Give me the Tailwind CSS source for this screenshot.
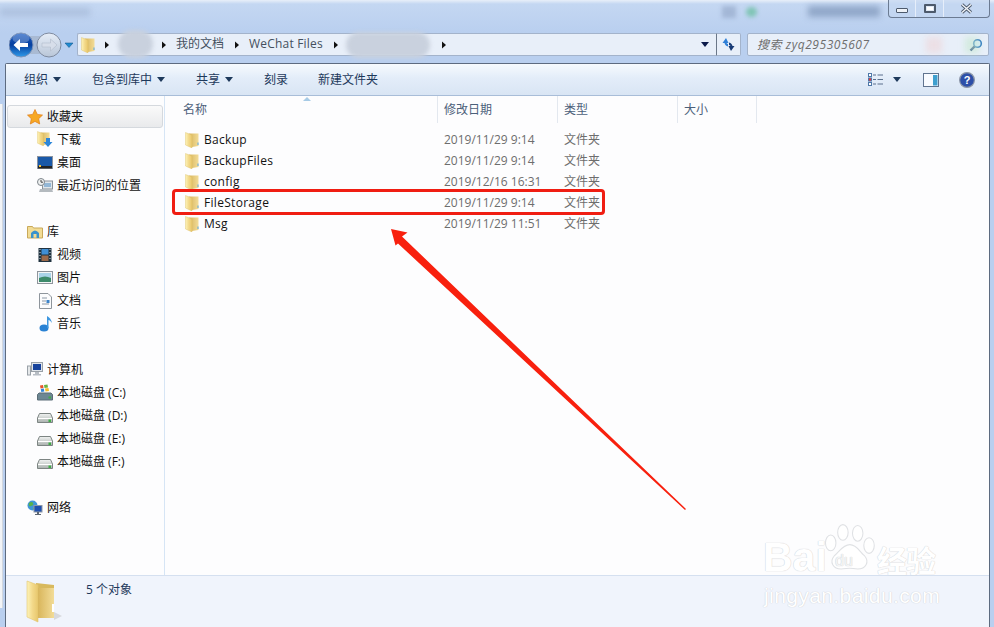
<!DOCTYPE html>
<html lang="zh-CN">
<head>
<meta charset="UTF-8">
<title>WeChat Files</title>
<script src="https://cdn.jsdelivr.net/npm/@tailwindcss/browser@4"></script>
</head>
<body class="relative w-[994px] h-[627px] overflow-hidden bg-[#b9cfef] text-[12px] leading-none text-[#111] font-['Open_Sans','Noto_Sans_CJK_SC',sans-serif]">

<svg class="absolute w-0 h-0">
  <defs>
    <linearGradient id="fold" x1="0" y1="0" x2="1" y2="0"><stop offset="0" stop-color="#fdf3b8"/><stop offset=".5" stop-color="#f3d98a"/><stop offset="1" stop-color="#e8c76c"/></linearGradient>
    <linearGradient id="inner" x1="0" y1="0" x2="1" y2="0"><stop offset="0" stop-color="#d9b65c"/><stop offset="1" stop-color="#f2dc98"/></linearGradient>
    <linearGradient id="back" x1="0" y1="0" x2="0" y2="1"><stop offset="0" stop-color="#1f5fc4"/><stop offset=".5" stop-color="#063f9f"/><stop offset="1" stop-color="#2f9bea"/></linearGradient>
    <linearGradient id="fwd" x1="0" y1="0" x2="0" y2="1"><stop offset="0" stop-color="#e6edf7"/><stop offset="1" stop-color="#b9c6d8"/></linearGradient>
    <linearGradient id="drive" x1="0" y1="0" x2="0" y2="1"><stop offset="0" stop-color="#f2f4f3"/><stop offset="1" stop-color="#a9b0ad"/></linearGradient>
    <symbol id="folder" viewBox="0 0 14 16">
      <path d="M4 1.500h9.500V14L7 15z" fill="url(#inner)"/>
      <path d="M.5.500 7 3V16L.5 13z" fill="url(#fold)" stroke="#dcbd62" stroke-width=".4"/>
      <rect x="12.500" y="10.500" width="1" height="2.500" fill="#5aa6e0"/>
    </symbol>
    <symbol id="tri" viewBox="0 0 8 8"><path d="M2 .5l4 3.500-4 3.500z" fill="#111"/></symbol>
    <symbol id="drv" viewBox="0 0 16 12">
      <path d="M2.500 1.500h11L15.500 6v4.500H.5V6z" fill="url(#drive)" stroke="#7d8583"/>
      <path d="M1 6.500h14" stroke="#fff"/>
      <rect x="11.500" y="7.500" width="2.500" height="2.500" fill="#3fae45"/>
    </symbol>
  </defs>
</svg>

<!-- title bar -->
<div class="relative h-[33px] bg-[linear-gradient(#e8eff9_0,#c4d7f2_4px,#b9cfef_100%)]">
  <div class="absolute left-0 top-[8px] w-[90px] h-[8px] bg-[#8fa3c4]/40 blur-[3px]"></div>
  <div class="absolute left-[722px] top-[6px] w-[14px] h-[12px] bg-[#8fa3c4]/60 blur-[2px]"></div>
  <div class="absolute left-[746px] top-[7px] w-[11px] h-[10px] rounded-full bg-[#6fc1a6]/80 blur-[2px]"></div>
  <div class="absolute left-[808px] top-[6px] w-[72px] h-[11px] bg-[#7088ad]/60 blur-[3px]"></div>
  <div class="absolute left-[888px] top-0 w-[102px] h-[18px] flex border border-t-0 border-[#6b7b92] rounded-b-[4px] bg-[#c5d7f1]/70">
    <div class="w-[27px] flex items-end justify-center pb-[4px] border-r border-[#e6eefa]"><div class="w-[12px] h-[5px] bg-[#eef2f7] border border-[#4d5a6c] rounded-[1px]"></div></div>
    <div class="w-[28px] flex items-center justify-center border-r border-[#e6eefa]"><div class="w-[12px] h-[9px] border-[2px] border-[#4d5a6c] bg-[#dfe8f4] rounded-[1px] flex items-center justify-center"><div class="w-[6px] h-[3px] bg-white"></div></div></div>
    <div class="flex-1 flex items-center justify-center">
      <svg width="13" height="11" viewBox="0 0 13 11"><path d="M2 1.500 11 9.500M11 1.500 2 9.500" stroke="#4d5a6c" stroke-width="3.200"/><path d="M2 1.500 11 9.500M11 1.500 2 9.500" stroke="#f2f5f9" stroke-width="1.400"/></svg>
    </div>
  </div>
</div>

<!-- nav row -->
<div class="flex h-[23px] pl-[9px] pr-[5px]">
  <div class="relative w-[68px] h-[23px] flex items-center">
    <svg width="68" height="28" viewBox="0 0 68 28" class="absolute left-0 top-[-2px]">
      <rect x="14" y="5" width="28" height="18" fill="#a9bad3"/>
      <circle cx="12" cy="14" r="12" fill="url(#back)" stroke="#7d93b8"/>
      <ellipse cx="12" cy="7.500" rx="8.500" ry="5" fill="#fff" opacity=".25"/>
      <path d="M4.500 14l6.500-6V12h8v4H11v4z" fill="#fff"/>
      <circle cx="40" cy="14" r="12" fill="url(#fwd)" stroke="#7f8ba0"/>
      <path d="M48 14l-6.500-6V12H33v4h8.500v4z" fill="#d7deea" stroke="#aab4c4" stroke-width=".5"/>
      <path d="M56 12h8l-4 4.500z" fill="#1f8ad0" stroke="#0f4f80" stroke-width=".5"/>
    </svg>
  </div>
  <div class="flex items-center w-[639px] h-[23px] bg-[#e8eff9] border border-r-0 border-[#a3b3cb] rounded-l-[2px] relative">
    <svg class="ml-[3px] w-[14px] h-[16px]"><use href="#folder"/></svg>
    <svg class="absolute left-[25px] top-[7px] w-[8px] h-[8px]"><use href="#tri"/></svg>
    <div class="absolute left-[40px] top-[-4px] w-[35px] h-[28px] rounded-full bg-[#c9d1de] blur-[2px]"></div>
    <svg class="absolute left-[82px] top-[7px] w-[8px] h-[8px]"><use href="#tri"/></svg>
    <span class="absolute left-[98px] top-[4px] text-[#444f5e]">我的文档</span>
    <svg class="absolute left-[155px] top-[7px] w-[8px] h-[8px]"><use href="#tri"/></svg>
    <span class="absolute left-[171px] top-[4px] text-[#444f5e] tracking-[.2px]">WeChat Files</span>
    <svg class="absolute left-[254px] top-[7px] w-[8px] h-[8px]"><use href="#tri"/></svg>
    <div class="absolute left-[268px] top-[-2px] w-[84px] h-[26px] rounded-full bg-[#c9d1de] blur-[2px]"></div>
    <svg class="absolute left-[362px] top-[7px] w-[8px] h-[8px]"><use href="#tri"/></svg>
    <svg class="absolute right-[7px] top-[8px]" width="8" height="5" viewBox="0 0 8 5"><path d="M0 0h8L4 5z" fill="#0b1a4a"/></svg>
  </div>
  <div class="w-[25px] h-[23px] bg-[#e8eff9] border border-l-[#6b7788] border-y-[#a3b3cb] border-r-[#a3b3cb] rounded-r-[2px] flex items-center justify-center">
    <svg width="15" height="15" viewBox="0 0 15 15"><path d="M5 1 1.500 6H3.500C4 8 5 9 7 9.500V7C6 6.800 5.700 6.300 5.500 6H7.500z" fill="#2f7fd6"/><path d="M10 14l3.500-5H11.500C11 7 10 6 8 5.500V8C9 8.200 9.300 8.700 9.500 9H7.500z" fill="#173a75"/></svg>
  </div>
  <div class="ml-[6px] w-[242px] h-[23px] bg-[#e8eff9] border border-[#a3b3cb] rounded-[2px] flex items-center pl-[9px] pr-[5px] relative">
    <span class="italic text-[#6d6d6d] whitespace-nowrap tracking-[.55px]">搜索 zyq295305607</span>
    <div class="absolute left-[178px] top-[3px] w-[16px] h-[16px] bg-[#f3c9c9]/40 blur-[3px]"></div>
    <div class="absolute left-[217px] top-[3px] w-[14px] h-[16px] bg-[#c5e8cf]/60 blur-[3px]"></div>
    <svg class="ml-auto" width="14" height="14" viewBox="0 0 14 14"><circle cx="8.500" cy="5.500" r="3.800" fill="#d9ecfa" stroke="#2a76c0" stroke-width="1.600"/><path d="M5.500 8.500 1.500 12.500" stroke="#173a75" stroke-width="2.400"/></svg>
  </div>
</div>

<!-- window frame -->
<div class="absolute left-0 top-[104px] bottom-[19px] w-[3px] bg-[#f2f4f7] border-r border-[#d4d8de]"></div>
<div class="absolute left-[5px] right-[4px] top-[63px] h-[564px] flex flex-col border-l-[1px] border-r-[1px] border-t border-[#5d6b80] rounded-t-[2px] bg-[#fdfdfe]">

  <!-- toolbar -->
  <div class="h-[32px] shrink-0 flex items-center text-[#1e395b] border-b border-[#a8bdd8] bg-[linear-gradient(#f6fafe,#e3edf9_45%,#d9e5f4)] relative">
    <span class="ml-[18px]">组织</span>
    <svg class="ml-[5px]" width="8" height="5" viewBox="0 0 8 5"><path d="M0 0h8L4 5z" fill="#1e395b"/></svg>
    <span class="ml-[31px]">包含到库中</span>
    <svg class="ml-[5px]" width="8" height="5" viewBox="0 0 8 5"><path d="M0 0h8L4 5z" fill="#1e395b"/></svg>
    <span class="ml-[31px]">共享</span>
    <svg class="ml-[5px]" width="8" height="5" viewBox="0 0 8 5"><path d="M0 0h8L4 5z" fill="#1e395b"/></svg>
    <span class="ml-[31px]">刻录</span>
    <span class="ml-[30px]">新建文件夹</span>
    <svg class="ml-auto" width="15" height="13" viewBox="0 0 15 13"><rect x=".5" y=".5" width="3" height="3" fill="#fff" stroke="#4f78a8"/><rect x=".5" y="5" width="3" height="3" fill="#e33" stroke="#4f78a8"/><rect x=".5" y="9.500" width="3" height="3" fill="#fff" stroke="#4f78a8"/><path d="M5 2h3M9.500 2H15M5 6.500h3M9.500 6.500H15M5 11h3M9.500 11H15" stroke="#5a6f8c"/></svg>
    <svg class="ml-[10px]" width="8" height="5" viewBox="0 0 8 5"><path d="M0 0h8L4 5z" fill="#1e395b"/></svg>
    <svg class="ml-[22px]" width="16" height="14" viewBox="0 0 16 14"><rect x=".5" y=".5" width="15" height="13" fill="#f8fbff" stroke="#60748f"/><rect x="10" y="2" width="4.500" height="10.500" fill="#3fa0cf"/></svg>
    <svg class="ml-[20px] mr-[14px]" width="16" height="16" viewBox="0 0 16 16"><circle cx="8" cy="8" r="7.400" fill="#2d4fa8" stroke="#8d97a8" stroke-width="1.200"/><text x="8" y="12" text-anchor="middle" font-size="11" font-weight="700" fill="#fff" font-family="Liberation Sans">?</text></svg>
  </div>

  <!-- body -->
  <div class="flex flex-1 min-h-0">
    <!-- nav pane -->
    <aside class="w-[159px] shrink-0 border-r border-[#d6e5f5] pt-[9px]">
      <div class="h-[23px] ml-[1px] mr-[1px] flex items-center pl-[19px] border border-[#d5d9de] rounded-[3px] bg-[linear-gradient(#fafafa,#e9eaec)]">
        <svg width="16" height="16" viewBox="0 0 16 16"><path d="M8 .5l2.300 4.900 5.200.7-3.800 3.600 1 5.300L8 12.400l-4.700 2.600 1-5.300L.5 6.100l5.200-.7z" fill="#f7a823" stroke="#e07b16" stroke-width=".7"/></svg>
        <span class="ml-[4px]">收藏夹</span>
      </div>
      <div class="h-[23px] flex items-center pl-[31px]">
        <svg width="16" height="17" viewBox="0 0 16 17"><use href="#folder" width="13" height="15"/><path d="M9 7h4v4h2.500L11 16 6.500 11H9z" fill="#2c86d9"/></svg>
        <span class="ml-[4px]">下载</span>
      </div>
      <div class="h-[23px] flex items-center pl-[31px]">
        <svg width="16" height="14" viewBox="0 0 16 14"><rect x=".5" y=".5" width="15" height="12" fill="#1958a8" stroke="#8a93a0"/><rect x="1" y="10" width="14" height="2.500" fill="#222"/><rect x="2" y="9" width="2" height="2" fill="#f3c33b"/></svg>
        <span class="ml-[4px]">桌面</span>
      </div>
      <div class="h-[23px] flex items-center pl-[31px]">
        <svg width="16" height="15" viewBox="0 0 16 15"><rect x="5.500" y="3" width="10" height="8" fill="#dfe5ea" stroke="#8b9299"/><rect x="7" y="5" width="7" height="4" fill="#93b7d6"/><path d="M3 11h12l1 3H2z" fill="#b4babf"/><circle cx="4" cy="4" r="3.500" fill="#eef0f0" stroke="#7e858b"/><path d="M4 2v2.200h2" stroke="#444" fill="none"/></svg>
        <span class="ml-[4px]">最近访问的位置</span>
      </div>

      <div class="h-[23px] mt-[23px] flex items-center pl-[21px]">
        <svg width="16" height="14" viewBox="0 0 16 14"><path d="M.5 13V1.500h5l1 1.500h9v10z" fill="#f2dc95" stroke="#c9a95a"/><path d="M4 13V8q4-5 8 0v5h-2.500V9h-3v4z" fill="#3a93cc"/></svg>
        <span class="ml-[4px]">库</span>
      </div>
      <div class="h-[23px] flex items-center pl-[31px]">
        <svg width="16" height="16" viewBox="0 0 16 16"><rect x="1.500" y="1" width="13" height="14" fill="#20323f"/><rect x="4.500" y="2" width="7" height="5.500" fill="#3f8ed4"/><rect x="4.500" y="8.500" width="7" height="5.500" fill="#9c6a4a"/><path d="M2.500 2.500h1M2.500 5.500h1M2.500 8.500h1M2.500 11.500h1M12.500 2.500h1M12.500 5.500h1M12.500 8.500h1M12.500 11.500h1" stroke="#cfe0ea" stroke-width="1.200"/></svg>
        <span class="ml-[4px]">视频</span>
      </div>
      <div class="h-[23px] flex items-center pl-[31px]">
        <svg width="16" height="13" viewBox="0 0 16 13"><rect x=".5" y=".5" width="15" height="12" fill="#f3f5f6" stroke="#8e959c"/><rect x="2" y="2" width="12" height="5" fill="#a9d3e8"/><path d="M2 7q6-3 12 0v4H2z" fill="#3c8a6a"/></svg>
        <span class="ml-[4px]">图片</span>
      </div>
      <div class="h-[23px] flex items-center pl-[33px]">
        <svg width="13" height="16" viewBox="0 0 13 16"><path d="M.5.500H9L12.500 4v11.500H.5z" fill="#fbfcfd" stroke="#8e959c"/><path d="M3 5h5M3 8h4M3 11h7" stroke="#8c98a6"/><rect x="7.500" y="7" width="3" height="3" fill="#3b83c9"/></svg>
        <span class="ml-[5px]">文档</span>
      </div>
      <div class="h-[23px] flex items-center pl-[33px]">
        <svg width="14" height="17" viewBox="0 0 14 17"><ellipse cx="5" cy="13" rx="4.500" ry="3.500" fill="#2a82d4"/><path d="M8 13V1q4 2 5 7-2-3-3.500-3v8z" fill="#3d97e0"/></svg>
        <span class="ml-[4px]">音乐</span>
      </div>

      <div class="h-[23px] mt-[23px] flex items-center pl-[21px]">
        <svg width="16" height="15" viewBox="0 0 16 15"><rect x=".5" y="4" width="3" height="9" fill="#e5e8ea" stroke="#9aa1a8"/><rect x="4.500" y=".5" width="11" height="9" fill="#dfe4ea" stroke="#9aa1a8"/><rect x="6" y="2" width="8" height="6" fill="#16429c"/><path d="M8 10h4v2h2v1.500H6V12h2z" fill="#b8bec5"/></svg>
        <span class="ml-[4px]">计算机</span>
      </div>
      <div class="h-[23px] flex items-center pl-[31px]">
        <svg width="16" height="17" viewBox="0 0 16 17"><path d="M3 1.500l3-.5.500 3-3 .5z" fill="#e8532b"/><path d="M7 1l3.500-.5.500 3-3.500.5z" fill="#6ab33e"/><path d="M3.800 5l3-.5.500 3-3 .5z" fill="#2f86d9"/><path d="M8 4.500l3.500-.5.500 3-3.500.5z" fill="#f6bd2c"/><path d="M.5 10.500 2 9h12l1.500 1.500v5.500H.5z" fill="#6d8793" stroke="#5a6d76"/><rect x="11.500" y="12.500" width="2.500" height="2" fill="#3fae45"/></svg>
        <span class="ml-[4px]">本地磁盘 (C:)</span>
      </div>
      <div class="h-[23px] flex items-center pl-[31px]"><svg class="w-[16px] h-[12px] mt-[4px]"><use href="#drv"/></svg><span class="ml-[4px]">本地磁盘 (D:)</span></div>
      <div class="h-[23px] flex items-center pl-[31px]"><svg class="w-[16px] h-[12px] mt-[4px]"><use href="#drv"/></svg><span class="ml-[4px]">本地磁盘 (E:)</span></div>
      <div class="h-[23px] flex items-center pl-[31px]"><svg class="w-[16px] h-[12px] mt-[4px]"><use href="#drv"/></svg><span class="ml-[4px]">本地磁盘 (F:)</span></div>

      <div class="h-[23px] mt-[23px] flex items-center pl-[21px]">
        <svg width="16" height="16" viewBox="0 0 16 16"><circle cx="5.500" cy="5.500" r="5" fill="#3f96d8"/><path d="M2 3q3-2 4 0t-2 3-2-3M6 8q3-1 3 1l-2 1z" fill="#58b24a"/><rect x="7" y="5.500" width="8" height="6.500" fill="#1f50b0" stroke="#8f98a5"/><path d="M10 12h2v2h2v1H8v-1h2z" fill="#5d6773"/></svg>
        <span class="ml-[4px]">网络</span>
      </div>
    </aside>

    <!-- file list -->
    <main class="flex-1 relative">
      <svg class="absolute left-[138px] top-[1px]" width="8" height="4" viewBox="0 0 8 4"><path d="M4 0l4 4H0z" fill="#a7cbe6"/></svg>
      <div class="flex h-[27px] text-[#4c607a]">
        <div class="w-[273px] pl-[18px] pt-[8px] border-r border-[#e3e8ef]">名称</div>
        <div class="w-[120px] pl-[6px] pt-[8px] border-r border-[#e3e8ef]">修改日期</div>
        <div class="w-[120px] pl-[6px] pt-[8px] border-r border-[#e3e8ef]">类型</div>
        <div class="w-[79px] pl-[6px] pt-[8px] border-r border-[#e3e8ef]">大小</div>
      </div>
      <div class="pt-[6px]">
        <div class="flex items-center h-[21px]"><svg class="ml-[20px] w-[14px] h-[16px]"><use href="#folder"/></svg><span class="ml-[5px] w-[240px] tracking-[.3px]">Backup</span><span class="w-[120px] text-[#6d6d6d]">2019/11/29 9:14</span><span class="text-[#6d6d6d]">文件夹</span></div>
        <div class="flex items-center h-[21px]"><svg class="ml-[20px] w-[14px] h-[16px]"><use href="#folder"/></svg><span class="ml-[5px] w-[240px] tracking-[.3px]">BackupFiles</span><span class="w-[120px] text-[#6d6d6d]">2019/11/29 9:14</span><span class="text-[#6d6d6d]">文件夹</span></div>
        <div class="flex items-center h-[21px]"><svg class="ml-[20px] w-[14px] h-[16px]"><use href="#folder"/></svg><span class="ml-[5px] w-[240px] tracking-[.3px]">config</span><span class="w-[120px] text-[#6d6d6d]">2019/12/16 16:31</span><span class="text-[#6d6d6d]">文件夹</span></div>
        <div class="flex items-center h-[21px]"><svg class="ml-[20px] w-[14px] h-[16px]"><use href="#folder"/></svg><span class="ml-[5px] w-[240px] tracking-[.3px]">FileStorage</span><span class="w-[120px] text-[#6d6d6d]">2019/11/29 9:14</span><span class="text-[#6d6d6d]">文件夹</span></div>
        <div class="flex items-center h-[21px]"><svg class="ml-[20px] w-[14px] h-[16px]"><use href="#folder"/></svg><span class="ml-[5px] w-[240px] tracking-[.3px]">Msg</span><span class="w-[120px] text-[#6d6d6d]">2019/11/29 11:51</span><span class="text-[#6d6d6d]">文件夹</span></div>
      </div>
    </main>
  </div>

  <!-- status bar -->
  <div class="h-[52px] shrink-0 flex border-t border-[#d5e0f0] bg-[#f0f4fc] text-[#1e395b]">
    <svg class="ml-[20px] mt-[4px] w-[40px] h-[44px]" viewBox="0 0 40 44">
      <path d="M10 3 28 5V38H12z" fill="#d8b95e"/>
      <path d="M1 1 12 5V42L1 37z" fill="url(#fold)" stroke="#e2c670" stroke-width=".6"/>
      <path d="M12 8H28V38H12z" fill="url(#inner)"/>
      <path d="M28 32l8 4-8 4z" fill="#bdbdbd" opacity=".5"/>
      <rect x="26" y="24" width="2" height="8" fill="#fff"/>
    </svg>
    <span class="ml-[20px] mt-[8px]">5 个对象</span>
  </div>
</div>

<!-- annotation: box and arrow -->
<div class="absolute left-[172px] top-[189px] w-[433px] h-[26px] border-[3px] border-[#f01d12] rounded-[4px]"></div>
<svg class="absolute left-0 top-0" width="994" height="627" viewBox="0 0 994 627">
  <path d="M391 229 407.500 232.500 402 236.500 686 509 685 510 398 243.500 395.500 245.500z" fill="#f8200e"/>
</svg>

<!-- watermark -->
<div class="absolute left-[763px] top-[520px] w-[180px] h-[100px] text-white font-['Liberation_Sans',sans-serif] [text-shadow:0_0_1px_#d0d2d6,0_0_1px_#d0d2d6]">
  <span class="absolute left-0 top-[17px] text-[41px] font-bold">Bai</span>
  <svg class="absolute left-[59px] top-0" width="54" height="58" viewBox="0 0 62 58">
    <g fill="#fff" stroke="#dfe1e4" stroke-width="1.200">
      <ellipse cx="10" cy="22" rx="6" ry="9"/><ellipse cx="24" cy="10" rx="6" ry="9"/><ellipse cx="41" cy="11" rx="6" ry="9"/><ellipse cx="54" cy="25" rx="6" ry="9"/>
      <path d="M32 24c8 0 11 8 17 13 6 7 1 15-8 15-4 0-6-1-9-1s-6 1-10 1c-9 0-14-8-8-15 6-5 10-13 18-13z"/>
    </g>
  </svg>
  <span class="absolute left-[72px] top-[33px] text-[16px] text-[#f4f5f6]">du</span>
  <span class="absolute left-[114px] top-[24px] text-[30px] font-bold font-['Noto_Sans_CJK_SC',sans-serif] tracking-[-1px]">经验</span>
  <span class="absolute left-[1px] top-[65px] text-[21px] tracking-[.4px]">jingyan.baidu.com</span>
</div>

</body>
</html>
